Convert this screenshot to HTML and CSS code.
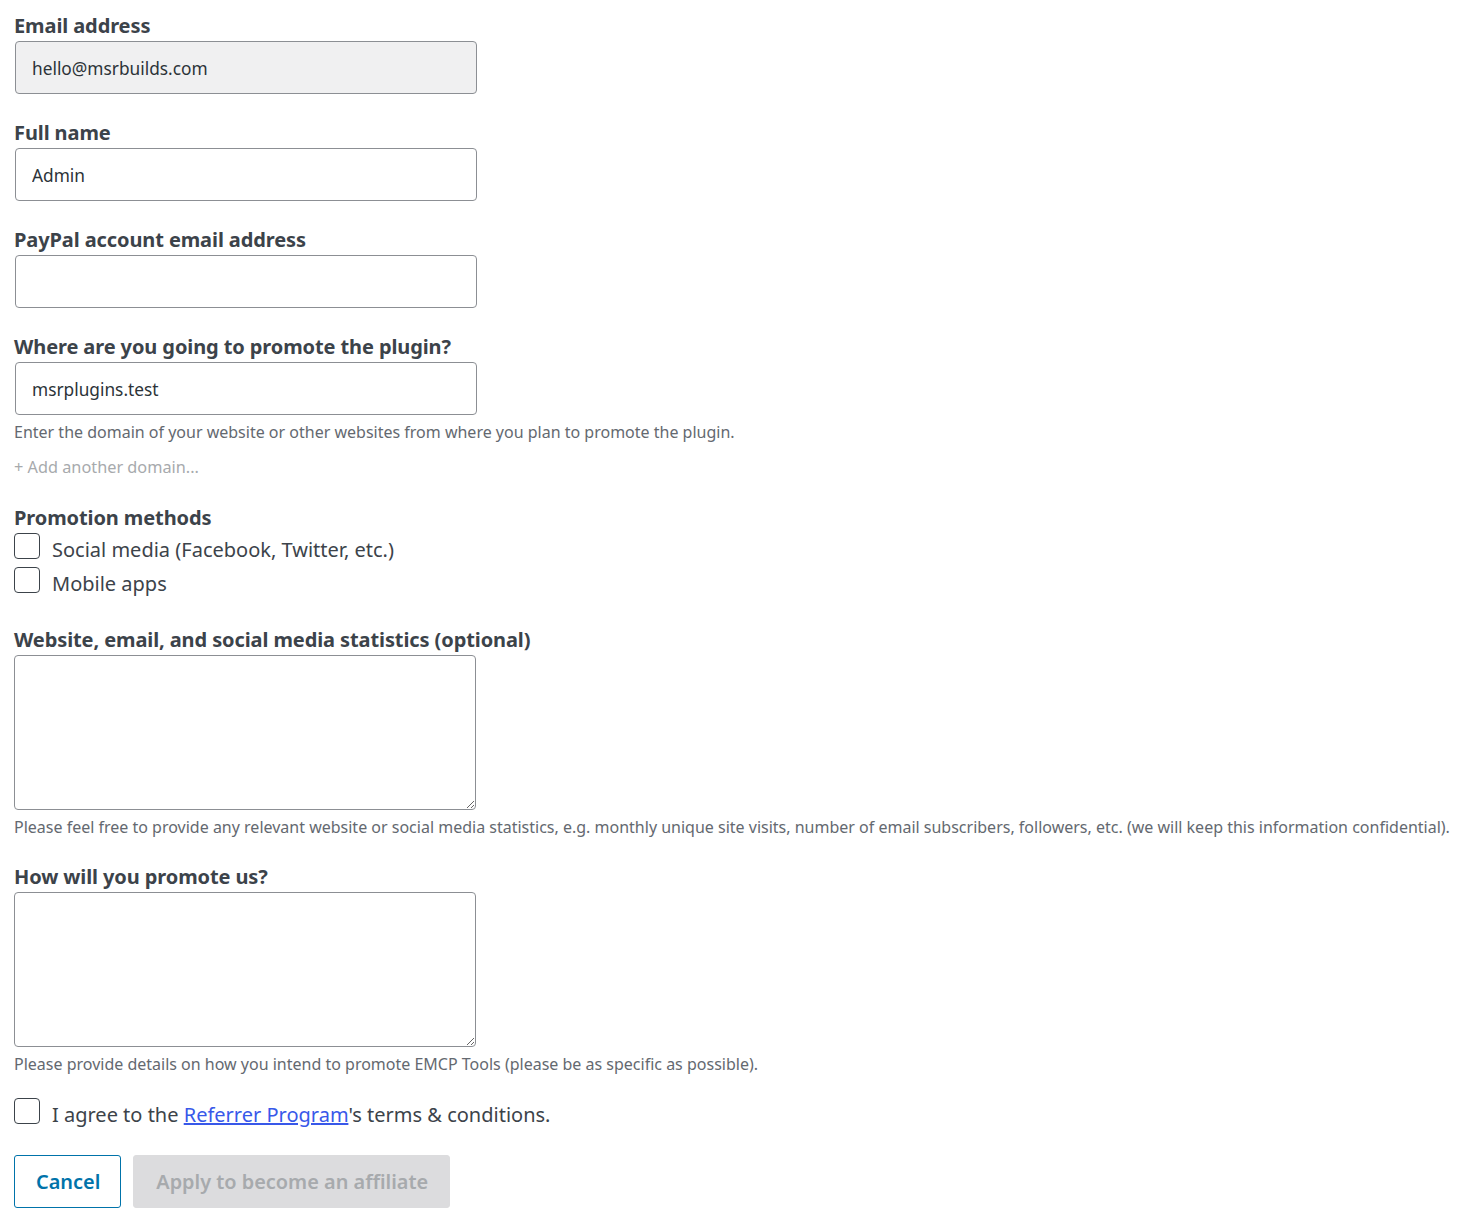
FILE: index.html
```html
<!DOCTYPE html>
<html lang="en">
<head>
<meta charset="utf-8">
<title>Affiliate application</title>
<link rel="stylesheet" href="styles.css">
</head>
<body>
<form class="form">
  <div class="field">
    <label class="label" for="email">Email address</label>
    <input class="input input-readonly" id="email" type="text" value="hello@msrbuilds.com" readonly>
  </div>
  <div class="field">
    <label class="label" for="name">Full name</label>
    <input class="input" id="name" type="text" value="Admin">
  </div>
  <div class="field">
    <label class="label" for="paypal">PayPal account email address</label>
    <input class="input" id="paypal" type="text" value="">
  </div>
  <div class="field">
    <label class="label" for="domain">Where are you going to promote the plugin?</label>
    <input class="input" id="domain" type="text" value="msrplugins.test">
    <p class="help">Enter the domain of your website or other websites from where you plan to promote the plugin.</p>
    <p class="add-domain">+ Add another domain...</p>
  </div>
  <div class="field">
    <div class="label">Promotion methods</div>
    <label class="check"><span class="box"></span><span class="check-text">Social media (Facebook, Twitter, etc.)</span></label>
    <label class="check"><span class="box"></span><span class="check-text">Mobile apps</span></label>
  </div>
  <div class="field">
    <label class="label" for="stats">Website, email, and social media statistics (optional)</label>
    <textarea class="textarea" id="stats"></textarea>
    <p class="help">Please feel free to provide any relevant website or social media statistics, e.g. monthly unique site visits, number of email subscribers, followers, etc. (we will keep this information confidential).</p>
  </div>
  <div class="field field-tight">
    <label class="label" for="how">How will you promote us?</label>
    <textarea class="textarea" id="how"></textarea>
    <p class="help">Please provide details on how you intend to promote EMCP Tools (please be as specific as possible).</p>
  </div>
  <div class="field field-agree">
    <label class="check"><span class="box"></span><span class="check-text">I agree to the <a class="link" href="#">Referrer Program</a>'s terms &amp; conditions.</span></label>
  </div>
  <div class="actions">
    <button type="button" class="btn btn-cancel">Cancel</button>
    <button type="button" class="btn btn-apply" disabled>Apply to become an affiliate</button>
  </div>
</form>
</body>
</html>
```
FILE: styles.css
```css
html, body {
  margin: 0;
  padding: 0;
  background: #ffffff;
}
body {
  font-family: "Noto Sans", "Open Sans", sans-serif;
  color: #3c434a;
}
.form {
  padding: 12px 14px 0 14px;
  display: flex;
  flex-direction: column;
}
.field {
  display: flex;
  flex-direction: column;
  align-items: flex-start;
  margin-bottom: 25px;
}
.field-tight {
  margin-top: -1px;
}
.label {
  display: block;
  font-size: 20px;
  font-weight: 700;
  line-height: 28px;
  margin-bottom: 1px;
  color: #3c434a;
  letter-spacing: -0.1px;
}
.input {
  box-sizing: border-box;
  width: 462px;
  height: 53px;
  margin: 0 0 0 1px;
  padding: 2px 17px 0 16px;
  border: 1px solid #8c8f94;
  border-radius: 4px;
  font-family: inherit;
  font-size: 17.3px;
  color: #2c3338;
  background: #fff;
  outline: none;
}
.input-readonly {
  background: #f0f0f1;
}
.textarea {
  box-sizing: border-box;
  width: 462px;
  height: 155px;
  margin: 0;
  border: 1px solid #8c8f94;
  border-radius: 4px;
  font-family: inherit;
  font-size: 17px;
  resize: vertical;
  background: #fff;
}
.help {
  margin: 5px 0 0 0;
  font-size: 16px;
  line-height: 24px;
  color: #646970;
  white-space: nowrap;
}
.add-domain {
  margin: 11px 0 0 0;
  font-size: 16.3px;
  line-height: 24px;
  color: #a7aaad;
}
.check {
  display: flex;
  align-items: flex-start;
  height: 34px;
  font-size: 20px;
  line-height: 34px;
  color: #3c434a;
  cursor: pointer;
}
.box {
  box-sizing: border-box;
  width: 26px;
  height: 26px;
  margin-top: 0;
  border: 1px solid #3c434a;
  border-radius: 4px;
  background: #fff;
  flex: none;
}
.check-text {
  margin-left: 12px;
  margin-top: 0;
}
.field-agree {
  margin-top: -3px;
  margin-bottom: 23px;
}
.link {
  color: #3858e9;
  text-decoration: underline;
}
.actions {
  display: flex;
  gap: 12px;
}
.btn {
  box-sizing: border-box;
  height: 53px;
  border-radius: 3px;
  font-family: inherit;
  font-size: 19.9px;
  font-weight: 600;
}
.btn-cancel {
  padding: 0 20px 0 21px;
  background: #fff;
  border: 1px solid #0073aa;
  color: #0073aa;
}
.btn-apply {
  padding: 0 21px 0 22px;
  background: #dcdcde;
  border: 1px solid #dcdcde;
  color: #a7aaad;
}
```
